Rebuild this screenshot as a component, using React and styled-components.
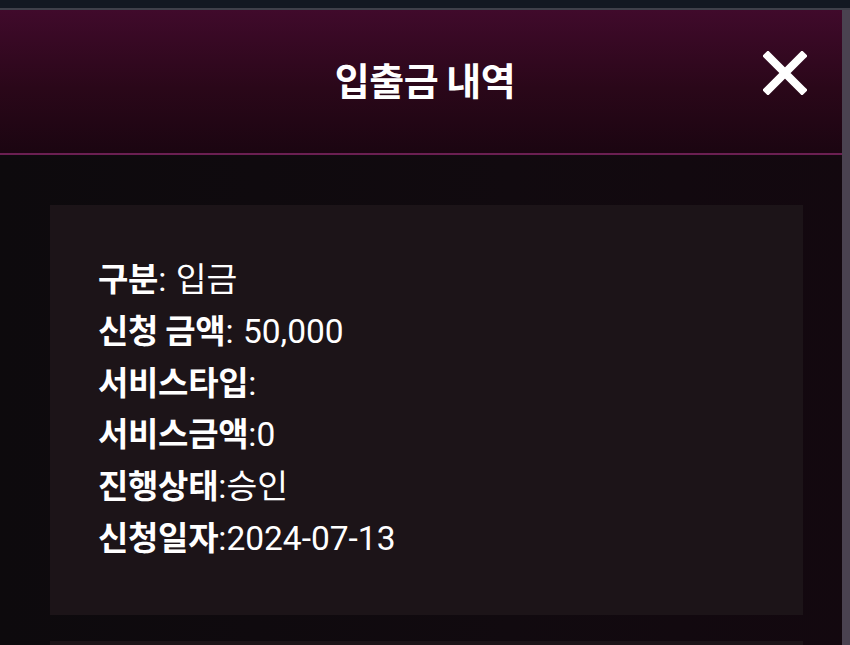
import React from 'react';
import styled, { createGlobalStyle } from 'styled-components';

const GlobalStyle = createGlobalStyle`
  html, body {
    margin: 0;
    padding: 0;
    background: #0e0b0e;
  }
  body {
    font-family: Roboto, 'Noto Sans CJK KR', sans-serif;
    color: #fff;
  }
`;

const Screen = styled.div`
  position: relative;
  width: 850px;
  height: 645px;
  overflow: hidden;
  background: linear-gradient(90deg, #0d0a0d 0%, #110a0f 60%, #13080f 100%);
`;

const StatusBar = styled.div`
  height: 8px;
  background: #121822;
  border-bottom: 2px solid #3e404a;
`;

const ScrollEdge = styled.div`
  position: absolute;
  top: 10px;
  right: 0;
  bottom: 0;
  width: 8px;
  background: #4a4250;
`;

const Header = styled.header`
  position: relative;
  height: 143px;
  display: flex;
  align-items: center;
  justify-content: center;
  background: linear-gradient(180deg, #400a2b 0%, #2a0719 55%, #1b0511 100%);
  border-bottom: 2px solid #6b1f52;
`;

const Title = styled.h1`
  margin: 0 0 6px;
  font-family: 'Noto Sans CJK KR', sans-serif;
  font-size: 38px;
  font-weight: 700;
  letter-spacing: -0.5px;
`;

const CloseButton = styled.button`
  position: absolute;
  right: 42px;
  top: 40px;
  width: 46px;
  height: 46px;
  padding: 0;
  border: none;
  background: none;
  cursor: pointer;
  display: flex;
  align-items: center;
  justify-content: center;
`;

const List = styled.div`
  display: flex;
  flex-direction: column;
  gap: 26px;
  padding: 50px 47px 0 50px;
`;

const Card = styled.section`
  background: #1c1418;
  padding: 47px 48px 52px;
  min-height: ${(p) => (p.$empty ? '200px' : 'auto')};
`;

const Row = styled.div`
  display: flex;
  align-items: baseline;
  height: 51.8px;
  font-size: 33.5px;
  line-height: 51.8px;
  white-space: nowrap;
`;

const Label = styled.span`
  font-family: 'Noto Sans CJK KR', sans-serif;
  font-size: 33px;
  font-weight: 700;
  letter-spacing: -0.3px;
`;

const Value = styled.span`
  font-weight: 400;
  margin-left: ${(p) => (p.$spaced ? '0.28em' : '0')};
`;

const rows = [
  { label: '구분', value: '입금', spaced: true },
  { label: '신청 금액', value: '50,000', spaced: true },
  { label: '서비스타입', value: '' },
  { label: '서비스금액', value: '0' },
  { label: '진행상태', value: '승인' },
  { label: '신청일자', value: '2024-07-13' },
];

const CloseIcon = () => (
  <svg width="44" height="44" viewBox="0 0 44 44">
    <path d="M5 5 L39 39 M39 5 L5 39" stroke="#fff" strokeWidth="8" strokeLinecap="square" />
  </svg>
);

export default function App() {
  return (
    <Screen>
      <GlobalStyle />
      <StatusBar />
      <Header>
        <Title>입출금 내역</Title>
        <CloseButton aria-label="닫기">
          <CloseIcon />
        </CloseButton>
      </Header>
      <List>
        <Card>
          {rows.map((r) => (
            <Row key={r.label}>
              <Label>{r.label}</Label>
              <span>:</span>
              <Value $spaced={r.spaced}>{r.value}</Value>
            </Row>
          ))}
        </Card>
        <Card $empty />
      </List>
      <ScrollEdge />
    </Screen>
  );
}
